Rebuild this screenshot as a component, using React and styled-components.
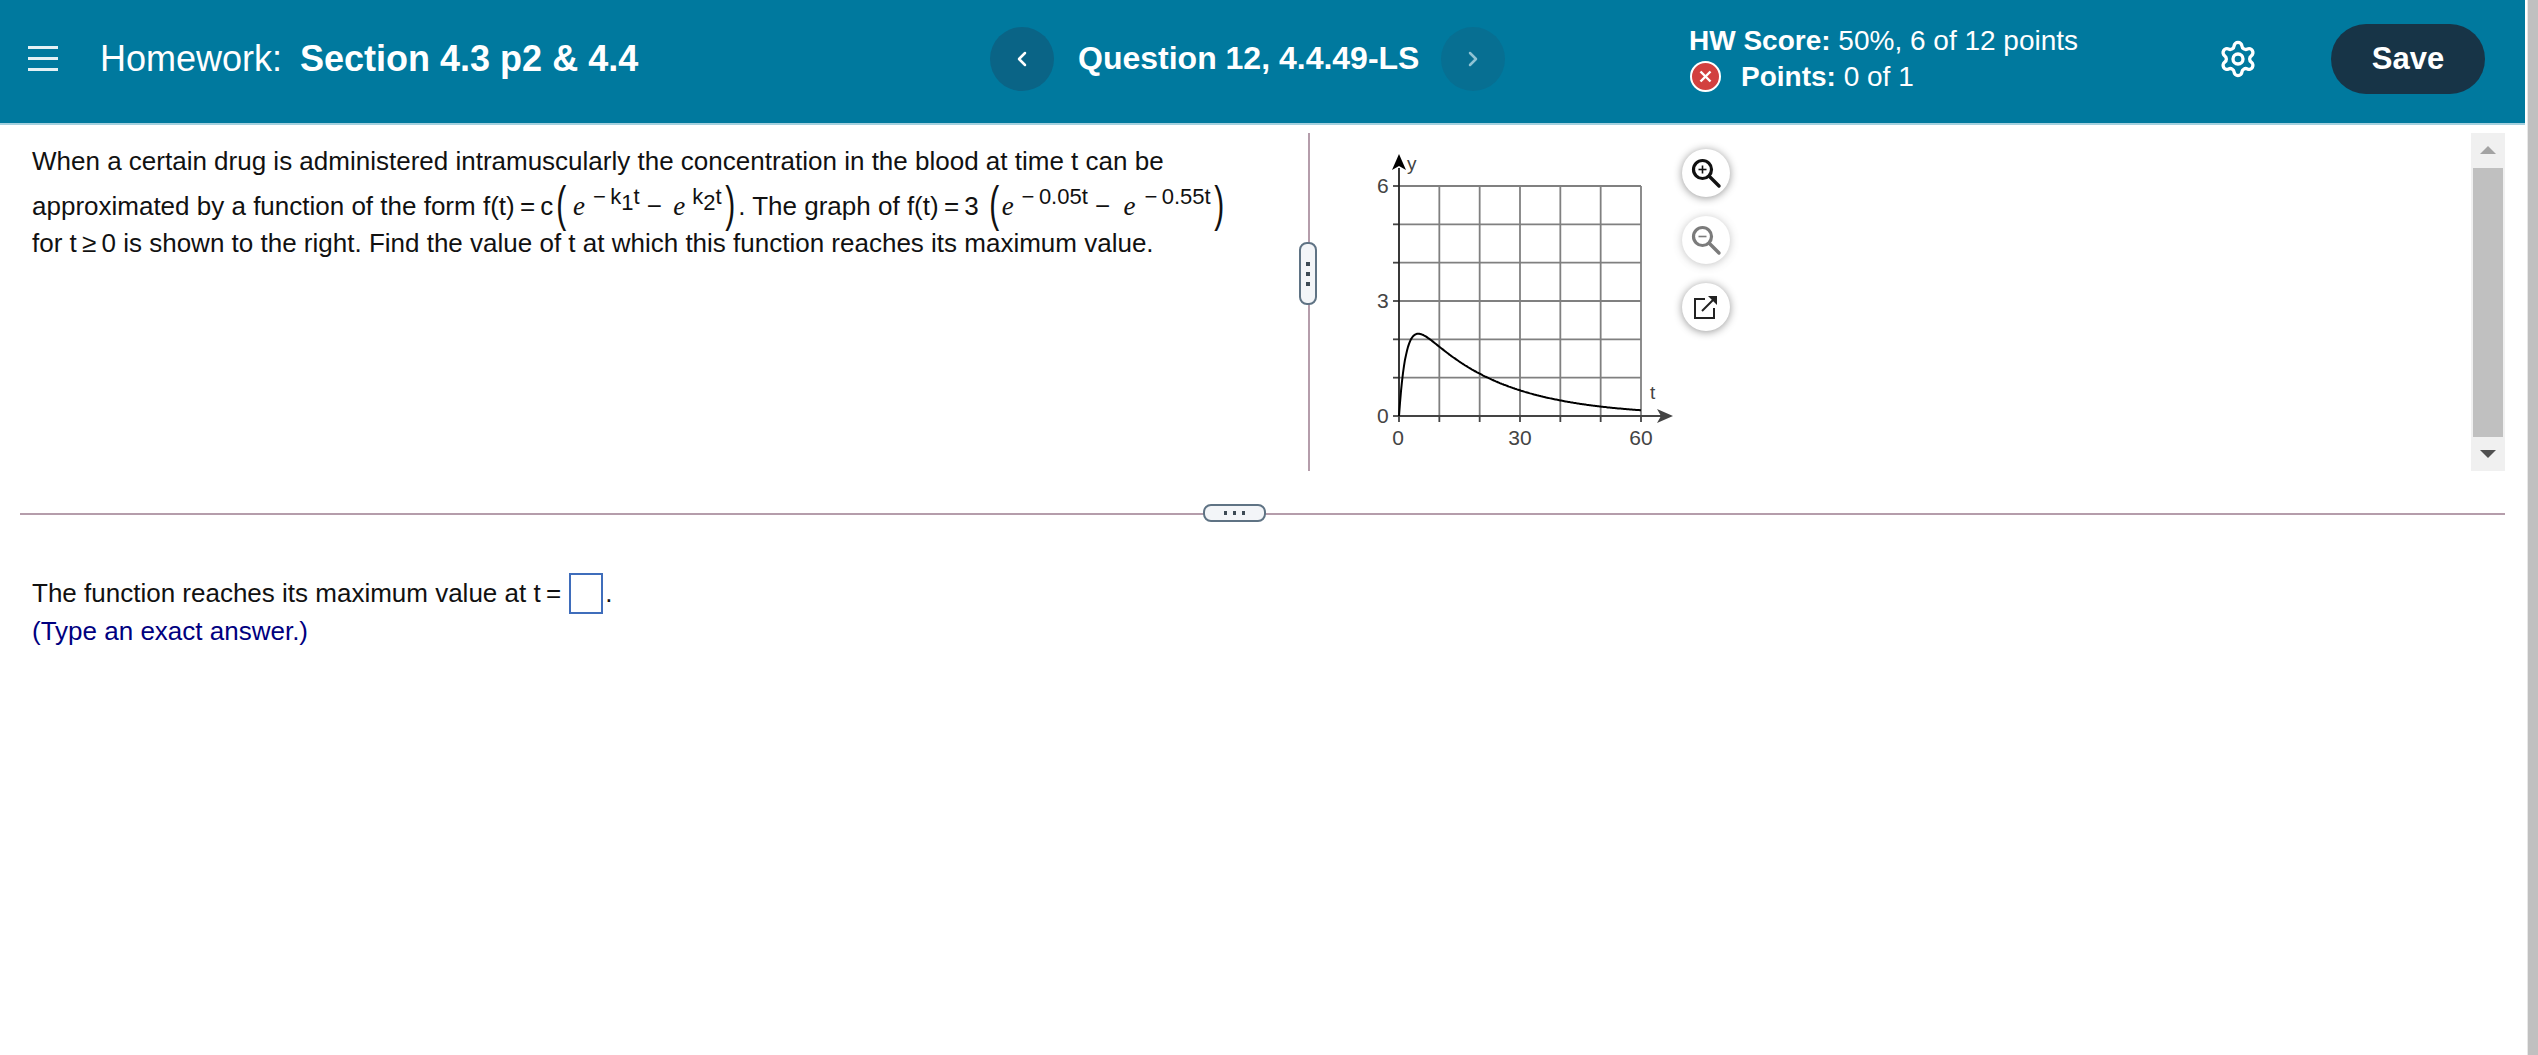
import React from 'react'
import styled, { createGlobalStyle } from 'styled-components'
import { Settings, ChevronLeft, ChevronRight } from 'lucide-react'

const GlobalStyle = createGlobalStyle`
  html, body {
    margin: 0;
    padding: 0;
    background: #fff;
    overflow: hidden;
  }
  body {
    font-family: "Liberation Sans", Arial, sans-serif;
    color: #111;
  }
`

const Page = styled.div`
  display: flex;
  width: 2538px;
  height: 1055px;
`

const Main = styled.div`
  width: 2526px;
  display: flex;
  flex-direction: column;
`

const PageScrollbar = styled.div`
  margin-left: 2px;
  width: 10px;
  background: #c0c0c0;
  border-left: 1px solid #e8e8e8;
`

const Header = styled.header`
  box-sizing: border-box;
  height: 125px;
  background: #00799e;
  border-bottom: 2px solid #a5d0de;
  color: #fff;
  display: flex;
  align-items: center;
`

const MenuButton = styled.div`
  width: 30px;
  margin-left: 28px;
  margin-right: 42px;
  display: flex;
  flex-direction: column;
  gap: 8px;
  margin-top: -6px;

  span {
    display: block;
    height: 3px;
    background: #e4f1f5;
  }
`

const Title = styled.div`
  width: 890px;
  font-size: 36px;
  margin-top: -6px;
  white-space: nowrap;

  b {
    margin-left: 18px;
  }
`

const NavCircle = styled.div`
  width: 64px;
  height: 64px;
  border-radius: 50%;
  background: ${p => (p.$disabled ? '#076f92' : '#0a6486')};
  color: ${p => (p.$disabled ? '#8fc3d4' : '#fff')};
  display: flex;
  align-items: center;
  justify-content: center;
  margin-top: -6px;
`

const QuestionName = styled.div`
  width: 387px;
  padding-left: 24px;
  box-sizing: border-box;
  font-size: 32px;
  font-weight: 700;
  margin-top: -6px;
  white-space: nowrap;
`

const Score = styled.div`
  margin-left: 184px;
  width: 529px;
  font-size: 28px;
  line-height: 36px;
  margin-top: -6px;
  white-space: nowrap;
`

const PointsRow = styled.div`
  display: flex;
  align-items: center;
  gap: 20px;
`

const WrongBadge = styled.span`
  box-sizing: border-box;
  width: 31px;
  height: 31px;
  border-radius: 50%;
  background: #d2403f;
  border: 2px solid #fff;
  display: flex;
  align-items: center;
  justify-content: center;
  margin-left: 1px;
`

const GearSlot = styled.div`
  width: 113px;
  display: flex;
  margin-top: -6px;
`

const SaveButton = styled.div`
  width: 154px;
  height: 70px;
  border-radius: 35px;
  background: #173447;
  font-size: 31px;
  font-weight: 700;
  display: flex;
  align-items: center;
  justify-content: center;
  margin-top: -6px;
`

const TopPane = styled.div`
  box-sizing: border-box;
  height: 388px;
  display: flex;
  padding-top: 8px;
`

const QuestionText = styled.div`
  width: 1308px;
  box-sizing: border-box;
  padding: 8px 0 0 32px;
  font-size: 26px;
  white-space: nowrap;
`

const TextLine = styled.div`
  height: ${p => p.$height}px;
  line-height: ${p => p.$height}px;
`

const MathE = styled.i`
  font-family: "Liberation Serif", serif;
  font-size: 27px;
  margin: 0 ${p => p.$after ?? 6}px 0 ${p => p.$before ?? 4}px;
`

const Sup = styled.span`
  font-size: 22px;
  vertical-align: 11px;
  line-height: 0;
`

const Sub = styled.span`
  font-size: 22px;
  vertical-align: -6px;
  line-height: 0;
`

const Paren = styled.span`
  display: inline-block;
  font-size: 50px;
  font-weight: 400;
  line-height: 0;
  vertical-align: -6px;
  transform: scaleX(0.6);
`

const VDivider = styled.div`
  position: relative;
  width: 2px;
  height: 338px;
  background: #b59dab;
`

const VHandle = styled.div`
  position: absolute;
  left: -9px;
  top: 109px;
  box-sizing: border-box;
  width: 18px;
  height: 63px;
  border: 2px solid #5f7384;
  border-radius: 8px;
  background: #f3f5f8;
  display: flex;
  flex-direction: column;
  align-items: center;
  justify-content: center;
  gap: 6px;

  span {
    width: 4px;
    height: 4px;
    background: #3d4a55;
  }
`

const GraphArea = styled.div`
  display: flex;
  flex: 1;
  align-items: flex-start;
  padding-left: 50px;
`

const GraphSvg = styled.svg`
  display: block;
  width: 320px;
  height: 310px;
  margin-top: 21px;
`

const Tools = styled.div`
  display: flex;
  flex-direction: column;
  gap: 19px;
  margin-left: 2px;
  margin-top: 16px;
`

const ToolButton = styled.div`
  width: 48px;
  height: 48px;
  border-radius: 50%;
  background: #fff;
  box-shadow: 0 1px 8px rgba(0, 0, 0, 0.42);
  display: flex;
  align-items: center;
  justify-content: center;
  opacity: ${p => (p.$disabled ? 0.55 : 1)};
`

const PaneScrollbar = styled.div`
  width: 34px;
  height: 338px;
  margin-right: 20px;
  margin-left: auto;
  background: #f0f0f0;
  display: flex;
  flex-direction: column;
  align-items: center;
  justify-content: space-between;
`

const ArrowCell = styled.div`
  height: 34px;
  display: flex;
  align-items: center;
  justify-content: center;
`

const Arrow = styled.div`
  width: 0;
  height: 0;
  border-left: 8px solid transparent;
  border-right: 8px solid transparent;
  border-${p => (p.$up ? 'bottom' : 'top')}: 8px solid ${p => (p.$up ? '#a3a3a3' : '#505050')};
`

const Thumb = styled.div`
  width: 30px;
  height: 269px;
  background: #c0c0c0;
`

const HDivider = styled.div`
  position: relative;
  height: 2px;
  margin: 0 20px;
  background: #b59dab;
`

const HHandle = styled.div`
  position: absolute;
  left: 1183px;
  top: -9px;
  box-sizing: border-box;
  width: 63px;
  height: 18px;
  border: 2px solid #5f7384;
  border-radius: 8px;
  background: #f3f5f8;
  display: flex;
  align-items: center;
  justify-content: center;
  gap: 6px;

  span {
    width: 3px;
    height: 4px;
    background: #3d4a55;
  }
`

const Answer = styled.div`
  padding: 56px 0 0 32px;
  font-size: 26px;
`

const AnswerLine = styled.div`
  height: 44px;
  display: flex;
  align-items: center;
  white-space: pre;
`

const AnswerBox = styled.span`
  box-sizing: border-box;
  width: 34px;
  height: 41px;
  margin: 0 2px 0 3px;
  border: 2px solid #3f6dbb;
  background: #fff;
`

const Hint = styled.div`
  margin-top: 1px;
  line-height: 30px;
  color: #000080;
`

// graph: origin at left/bottom of the plot, 4.03px per t and 38.3px per y
const OX = 39
const OY = 262
const toX = t => OX + t * (242 / 60)
const toY = y => OY - y * (230 / 6)
const drug = t => 3 * (Math.exp(-0.05 * t) - Math.exp(-0.55 * t))

const curve = Array.from({ length: 241 }, (_, i) => {
  const t = i / 4
  return `${toX(t).toFixed(1)},${toY(drug(t)).toFixed(1)}`
}).join(' ')

const Graph = () => (
  <GraphSvg viewBox="0 0 320 310">
    <g stroke="#808080" strokeWidth="1.8" fill="none">
      {[10, 20, 30, 40, 50, 60].map(t => (
        <line key={t} x1={toX(t)} y1={toY(6)} x2={toX(t)} y2={OY} />
      ))}
      {[1, 2, 3, 4, 5, 6].map(y => (
        <line key={y} x1={OX} y1={toY(y)} x2={toX(60)} y2={toY(y)} />
      ))}
    </g>
    <g stroke="#444" strokeWidth="1.8">
      {[1, 2, 3, 4, 5, 6].map(y => (
        <line key={y} x1={OX - 6} y1={toY(y)} x2={OX} y2={toY(y)} />
      ))}
      {[10, 20, 30, 40, 50, 60].map(t => (
        <line key={t} x1={toX(t)} y1={OY} x2={toX(t)} y2={OY + 6} />
      ))}
      <line x1={OX - 6} y1={OY} x2={OX} y2={OY} />
      <line x1={OX} y1={OY} x2={OX} y2={OY + 6} />
    </g>
    <line x1={OX} y1={OY} x2={OX} y2="14" stroke="#222" strokeWidth="1.8" />
    <path d={`M${OX} 0 L${OX + 7} 16 L${OX} 12 L${OX - 7} 16 Z`} fill="#000" />
    <line x1={OX} y1={OY} x2="305" y2={OY} stroke="#444" strokeWidth="1.8" />
    <path d={`M313 ${OY} L297 ${OY - 7} L301 ${OY} L297 ${OY + 7} Z`} fill="#444" />
    <polyline points={curve} fill="none" stroke="#000" strokeWidth="2" />
    <g fontFamily="Liberation Sans, Arial, sans-serif" fontSize="21" fill="#444">
      <text x={OX + 8} y="16" fontSize="19">y</text>
      <text x="290" y="245" fontSize="19">t</text>
      <text x="17" y="39">6</text>
      <text x="17" y="154">3</text>
      <text x="17" y="269">0</text>
      <text x={OX - 1} y="291" textAnchor="middle">0</text>
      <text x={toX(30)} y="291" textAnchor="middle">30</text>
      <text x={toX(60)} y="291" textAnchor="middle">60</text>
    </g>
  </GraphSvg>
)

const Magnifier = ({ plus }) => (
  <svg width="34" height="34" viewBox="0 0 34 34" fill="none" stroke="#111">
    <circle cx="13.5" cy="13.5" r="9" strokeWidth="3.2" />
    <line x1="20.5" y1="20.5" x2="30" y2="30" strokeWidth="3.4" strokeLinecap="round" />
    <line x1="9.5" y1="13.5" x2="17.5" y2="13.5" strokeWidth="1.6" />
    {plus && <line x1="13.5" y1="9.5" x2="13.5" y2="17.5" strokeWidth="1.6" />}
  </svg>
)

const OpenIcon = () => (
  <svg width="26" height="26" viewBox="0 0 26 26" fill="none" stroke="#222" strokeWidth="2">
    <path d="M12 5 H2 V24 H21 V14" />
    <path d="M9 17 L22 4" />
    <path d="M15 2 H24 V11 L21 8 L18 5 Z" fill="#222" stroke="none" />
  </svg>
)

const App = () => (
  <Page>
    <GlobalStyle />
    <Main>
      <Header>
        <MenuButton><span /><span /><span /></MenuButton>
        <Title>Homework:<b>Section 4.3 p2 &amp; 4.4</b></Title>
        <NavCircle><ChevronLeft size={24} strokeWidth={2.5} /></NavCircle>
        <QuestionName>Question 12, 4.4.49-LS</QuestionName>
        <NavCircle $disabled><ChevronRight size={24} strokeWidth={2.5} /></NavCircle>
        <Score>
          <div><b>HW Score:</b> 50%, 6 of 12 points</div>
          <PointsRow>
            <WrongBadge>
              <svg width="13" height="13" viewBox="0 0 13 13" stroke="#fff" strokeWidth="2.4">
                <line x1="1.5" y1="1.5" x2="11.5" y2="11.5" />
                <line x1="11.5" y1="1.5" x2="1.5" y2="11.5" />
              </svg>
            </WrongBadge>
            <span><b>Points:</b> 0 of 1</span>
          </PointsRow>
        </Score>
        <GearSlot><Settings size={40} strokeWidth={2} /></GearSlot>
        <SaveButton>Save</SaveButton>
      </Header>
      <TopPane>
        <QuestionText>
          <TextLine $height={40}>When a certain drug is administered intramuscularly the concentration in the blood at time t can be</TextLine>
          <TextLine $height={50}>
            approximated by a function of the form f(t){'\u2009'}={'\u2009'}c<Paren>(</Paren><MathE $before={3} $after={8}>e</MathE>
            <Sup>−{'\u2009'}k<Sub>1</Sub>t</Sup> − <MathE $after={7}>e</MathE><Sup>k<Sub>2</Sub>t</Sup><Paren>)</Paren>
            . The graph of f(t){'\u2009'}={'\u2009'}3 <Paren>(</Paren><MathE $before={-1} $after={8}>e</MathE>
            <Sup>−{'\u2009'}0.05t</Sup> − <MathE $before={6} $after={9}>e</MathE><Sup>−{'\u2009'}0.55t</Sup><Paren>)</Paren>
          </TextLine>
          <TextLine $height={24}>for t{'\u2009'}≥{'\u2009'}0 is shown to the right. Find the value of t at which this function reaches its maximum value.</TextLine>
        </QuestionText>
        <VDivider>
          <VHandle><span /><span /><span /></VHandle>
        </VDivider>
        <GraphArea>
          <Graph />
          <Tools>
            <ToolButton><Magnifier plus /></ToolButton>
            <ToolButton $disabled><Magnifier /></ToolButton>
            <ToolButton><OpenIcon /></ToolButton>
          </Tools>
          <PaneScrollbar>
            <ArrowCell><Arrow $up /></ArrowCell>
            <Thumb />
            <ArrowCell><Arrow /></ArrowCell>
          </PaneScrollbar>
        </GraphArea>
      </TopPane>
      <HDivider>
        <HHandle><span /><span /><span /></HHandle>
      </HDivider>
      <Answer>
        <AnswerLine>The function reaches its maximum value at t{'\u2009'}={'\u2009'}<AnswerBox />.</AnswerLine>
        <Hint>(Type an exact answer.)</Hint>
      </Answer>
    </Main>
    <PageScrollbar />
  </Page>
)

export default App
